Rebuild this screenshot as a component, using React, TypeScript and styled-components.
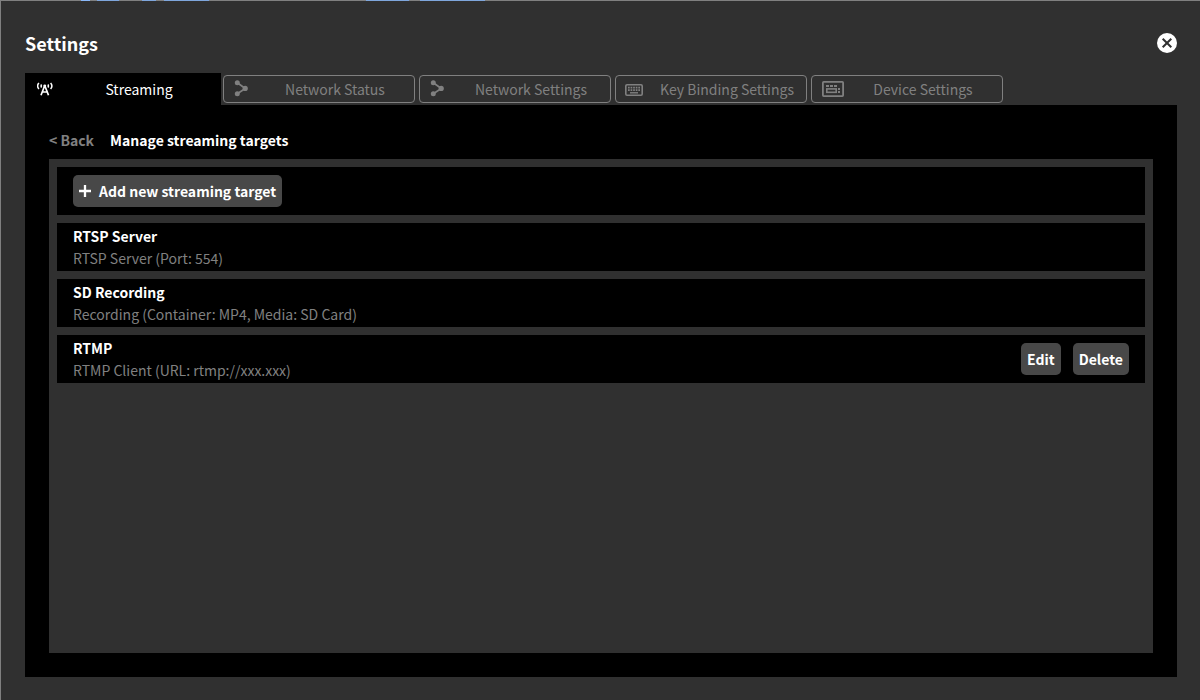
import React from "react";
import styled, { createGlobalStyle } from "styled-components";

const GlobalStyle = createGlobalStyle`
  *, *::before, *::after { box-sizing: border-box; }
  html, body { margin: 0; padding: 0; background: #303030; }
  body, button {
    font-family: "Noto Sans CJK JP", "Noto Sans", sans-serif;
    font-size: 14px;
    line-height: 22px;
  }
`;

const Page = styled.div`
  display: flex;
  flex-direction: column;
  min-height: 100vh;
  padding: 0 23px 23px 24px;
  border-left: 1px solid #808080;
  background: #303030;
  color: #fff;
`;

const BackdropEdge = styled.div`
  height: 1px;
  margin: 0 -23px 0 -24px;
  background: linear-gradient(
    to right,
    #808080 80px, #8ab8f8 80px 89px, #808080 89px 96px, #7fa6dc 96px 118px,
    #808080 118px 141px, #7fa6dc 141px 155px, #808080 155px 163px, #7fa6dc 163px 208px,
    #808080 208px 365px, #7fa6dc 365px 408px, #808080 408px 419px, #7fa6dc 419px 484px,
    #808080 484px
  );
`;

const Header = styled.header`
  display: flex;
  align-items: center;
  justify-content: space-between;
  height: 72px;
  padding-bottom: 12px;
  padding-top: 24px;
`;

const Title = styled.h1`
  margin: 0;
  font-size: 18px;
  line-height: 36px;
  font-weight: 700;
`;

const CloseButton = styled.button`
  display: flex;
  width: 20px;
  height: 20px;
  padding: 0;
  border: 0;
  border-radius: 50%;
  background: none;
  cursor: pointer;
`;

const Tabs = styled.nav`
  display: flex;
`;

const TabCell = styled.div<{ $active?: boolean }>`
  flex: 0 1 196px;
  height: 32px;
  padding: 2px;
  background: ${(p) => (p.$active ? "#000" : "transparent")};
`;

const Tab = styled.button<{ $active?: boolean }>`
  display: flex;
  align-items: center;
  width: 100%;
  height: 28px;
  padding: 0;
  border: 1px solid ${(p) => (p.$active ? "#000" : "#808080")};
  border-radius: 4px;
  background: transparent;
  color: ${(p) => (p.$active ? "#fff" : "#808080")};
  white-space: nowrap;
  cursor: pointer;
`;

const TabIcon = styled.span`
  display: flex;
  flex: none;
  width: 32px;
  padding-left: 9px;
`;

const TabLabel = styled.span`
  flex: 1;
  text-align: center;
`;

const Panel = styled.main`
  display: flex;
  flex: 1;
  flex-direction: column;
  padding: 24px;
  background: #000;
`;

const Breadcrumb = styled.div`
  display: flex;
  align-items: center;
  gap: 16px;
  height: 22px;
  margin-bottom: 8px;
`;

const BackLink = styled.a`
  color: #808080;
  font-weight: 700;
  text-decoration: none;
`;

const Heading = styled.h2`
  margin: 0;
  font-size: 14px;
  line-height: 22px;
  font-weight: 700;
`;

const TargetList = styled.ul`
  display: flex;
  flex: 1;
  flex-direction: column;
  gap: 8px;
  margin: 0;
  padding: 8px;
  background: #303030;
  list-style: none;
`;

const Row = styled.li`
  display: flex;
  align-items: center;
  justify-content: space-between;
  height: 48px;
  padding: 0 16px;
  background: #000;
`;

const TargetName = styled.div`
  font-weight: 700;
`;

const TargetDetail = styled.div`
  color: #808080;
`;

const Actions = styled.div`
  display: flex;
  gap: 12px;
`;

const Button = styled.button`
  display: flex;
  align-items: center;
  gap: 8px;
  height: 32px;
  padding: 0 6px;
  border: 0;
  border-radius: 5px;
  background: #484848;
  color: #fff;
  font-weight: 700;
  white-space: nowrap;
  cursor: pointer;
`;

const AntennaIcon = () => (
  <svg width="16" height="14" viewBox="0 0 16 14" fill="none" stroke="currentColor" strokeWidth="1.5" aria-hidden="true">
    <path d="M1.9 1C.4 2.700.4 5.300 1.900 7M13.600 1c1.500 1.700 1.500 4.300 0 6M4.600 2.500c-.6.9-.6 2.100 0 3M10.900 2.500c.6.9.6 2.100 0 3" />
    <path d="M7.750 3.500 4 13.200M7.750 3.500 11.500 13.200M5.300 10h4.900" strokeWidth="1.700" />
    <circle cx="7.750" cy="3.800" r="1.400" fill="currentColor" stroke="none" />
  </svg>
);

const NetworkIcon = () => (
  <svg width="15" height="18" viewBox="0 0 15 18" aria-hidden="true">
    <path d="M4.300 2.800 12.300 8.500 4.300 13.700" fill="none" stroke="currentColor" strokeWidth="1.700" />
    <circle cx="4.300" cy="2.700" r="2.500" fill="currentColor" />
    <circle cx="12.200" cy="8.400" r="2.600" fill="currentColor" />
    <circle cx="4.300" cy="13.700" r="2.500" fill="currentColor" />
  </svg>
);

const KeyboardIcon = () => (
  <svg width="18" height="14" viewBox="0 0 18 14" fill="none" stroke="currentColor" aria-hidden="true">
    <rect x=".8" y="2.800" width="16.400" height="10.400" rx="1.200" strokeWidth="1.600" />
    <path d="M3 5.700h12M3 8.200h12" strokeWidth="1.700" strokeDasharray="1.700 .88" />
    <path d="M5 10.800h8" strokeWidth="1.400" />
  </svg>
);

const DeviceIcon = () => (
  <svg width="23" height="16" viewBox="0 0 23 16" fill="none" stroke="currentColor" aria-hidden="true">
    <rect x="1.900" y=".9" width="20.200" height="14.200" rx=".8" strokeWidth="1.800" />
    <path d="M5 5h3M9 5h3M13 5h3M17 8h2M17 11h2" strokeWidth="2" />
    <rect x="5.800" y="7.900" width="9.400" height="3.400" strokeWidth="1.600" />
  </svg>
);

const CloseIcon = () => (
  <svg width="20" height="20" viewBox="0 0 20 20" aria-hidden="true">
    <circle cx="10" cy="10" r="10" fill="#fff" />
    <path d="m5.700 5.700 8.600 8.600m0-8.600-8.600 8.600" stroke="#303030" strokeWidth="2" />
  </svg>
);

const PlusIcon = () => (
  <svg width="12" height="12" viewBox="0 0 12 12" aria-hidden="true">
    <path d="M6 0v12M0 6h12" stroke="currentColor" strokeWidth="2.300" />
  </svg>
);

const tabs = [
  { label: "Streaming", icon: <AntennaIcon />, active: true },
  { label: "Network Status", icon: <NetworkIcon /> },
  { label: "Network Settings", icon: <NetworkIcon /> },
  { label: "Key Binding Settings", icon: <KeyboardIcon /> },
  { label: "Device Settings", icon: <DeviceIcon /> },
];

const targets = [
  { name: "RTSP Server", detail: "RTSP Server (Port: 554)" },
  { name: "SD Recording", detail: "Recording (Container: MP4, Media: SD Card)" },
  { name: "RTMP", detail: "RTMP Client (URL: rtmp://xxx.xxx)", editable: true },
];

export default function App() {
  return (
    <>
      <GlobalStyle />
      <Page>
        <BackdropEdge />
        <Header>
          <Title>Settings</Title>
          <CloseButton type="button" aria-label="Close">
            <CloseIcon />
          </CloseButton>
        </Header>
        <Tabs>
          {tabs.map((tab) => (
            <TabCell key={tab.label} $active={tab.active}>
              <Tab type="button" $active={tab.active}>
                <TabIcon>{tab.icon}</TabIcon>
                <TabLabel>{tab.label}</TabLabel>
              </Tab>
            </TabCell>
          ))}
        </Tabs>
        <Panel>
          <Breadcrumb>
            <BackLink href="#">&lt; Back</BackLink>
            <Heading>Manage streaming targets</Heading>
          </Breadcrumb>
          <TargetList>
            <Row>
              <Button type="button">
                <PlusIcon />
                Add new streaming target
              </Button>
            </Row>
            {targets.map((target) => (
              <Row key={target.name}>
                <div>
                  <TargetName>{target.name}</TargetName>
                  <TargetDetail>{target.detail}</TargetDetail>
                </div>
                {target.editable && (
                  <Actions>
                    <Button type="button">Edit</Button>
                    <Button type="button">Delete</Button>
                  </Actions>
                )}
              </Row>
            ))}
          </TargetList>
        </Panel>
      </Page>
    </>
  );
}
